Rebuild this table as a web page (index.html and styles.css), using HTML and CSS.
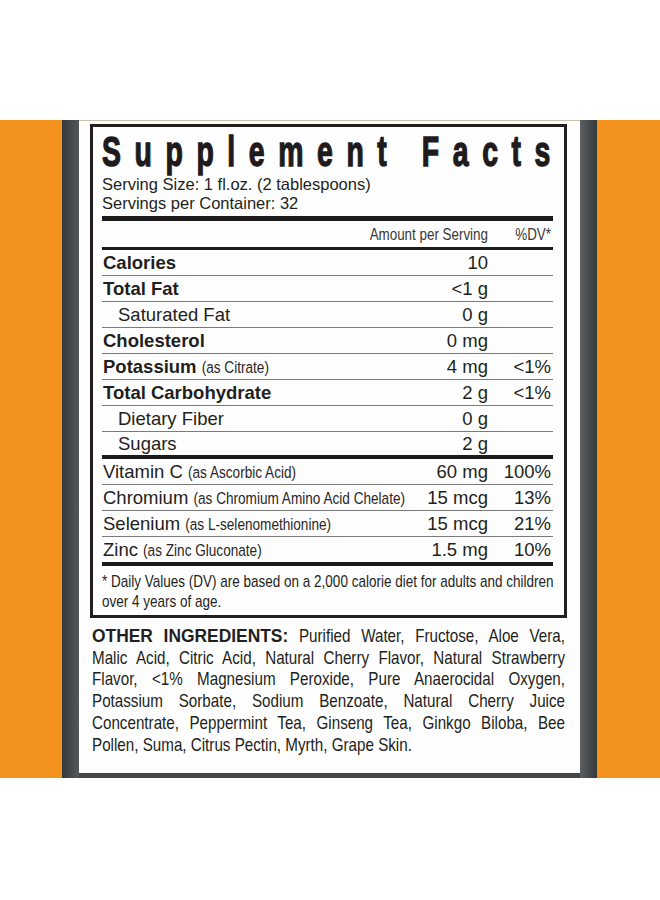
FILE: index.html
```html
<!DOCTYPE html>
<html lang="en">
<head>
<meta charset="utf-8">
<title>Supplement Facts</title>
<link rel="stylesheet" href="styles.css">
</head>
<body>
<div class="page">
  <div class="band">
    <div class="frame">
      <div class="panel">
        <section class="label">
          <h1 class="title"><span class="title-text">Supplement Facts</span></h1>
          <p class="serving">Serving Size: 1 fl.oz. (2 tablespoons)<br>Servings per Container: 32</p>
          <div class="head"><span class="h-amt">Amount per Serving</span><span class="h-dv">%DV*</span></div>
          <div class="rows">
            <div class="row"><span class="name b">Calories</span><span class="amt">10</span><span class="dv"></span></div>
            <div class="row"><span class="name b">Total Fat</span><span class="amt">&lt;1 g</span><span class="dv"></span></div>
            <div class="row"><span class="name sub">Saturated Fat</span><span class="amt">0 g</span><span class="dv"></span></div>
            <div class="row"><span class="name b">Cholesterol</span><span class="amt">0 mg</span><span class="dv"></span></div>
            <div class="row"><span class="name"><b>Potassium</b> <small>(as Citrate)</small></span><span class="amt">4 mg</span><span class="dv">&lt;1%</span></div>
            <div class="row"><span class="name b">Total Carbohydrate</span><span class="amt">2 g</span><span class="dv">&lt;1%</span></div>
            <div class="row"><span class="name sub">Dietary Fiber</span><span class="amt">0 g</span><span class="dv"></span></div>
            <div class="row row-end"><span class="name sub">Sugars</span><span class="amt">2 g</span><span class="dv"></span></div>
            <div class="row"><span class="name">Vitamin C <small>(as Ascorbic Acid)</small></span><span class="amt">60 mg</span><span class="dv">100%</span></div>
            <div class="row"><span class="name">Chromium <small>(as Chromium Amino Acid Chelate)</small></span><span class="amt">15 mcg</span><span class="dv">13%</span></div>
            <div class="row"><span class="name">Selenium <small>(as L-selenomethionine)</small></span><span class="amt">15 mcg</span><span class="dv">21%</span></div>
            <div class="row row-last"><span class="name">Zinc <small>(as Zinc Gluconate)</small></span><span class="amt">1.5 mg</span><span class="dv">10%</span></div>
          </div>
          <p class="note"><span class="note-text">* Daily Values (DV) are based on a 2,000 calorie diet for adults and children<br>over 4 years of age.</span></p>
        </section>
        <p class="ingredients">
          <span class="line"><b>OTHER</b> <b>INGREDIENTS:</b> Purified Water, Fructose, Aloe Vera,</span>
          <span class="line">Malic Acid, Citric Acid, Natural Cherry Flavor, Natural Strawberry</span>
          <span class="line">Flavor, &lt;1% Magnesium Peroxide, Pure Anaerocidal Oxygen,</span>
          <span class="line">Potassium Sorbate, Sodium Benzoate, Natural Cherry Juice</span>
          <span class="line">Concentrate, Peppermint Tea, Ginseng Tea, Ginkgo Biloba, Bee</span>
          <span class="line last">Pollen, Suma, Citrus Pectin, Myrth, Grape Skin.</span>
        </p>
      </div>
    </div>
  </div>
</div>
</body>
</html>
```
FILE: styles.css
```css
* { box-sizing: border-box; }
html, body { margin: 0; padding: 0; background: #ffffff; }
body { font-family: "Liberation Sans", Arial, sans-serif; color: #231f20; }

.page { padding-top: 120px; height: 900px; overflow: hidden; }

.band {
  background: #f4921e;
  height: 658px;
  display: flex;
}

.frame {
  margin: 0 63px 0 62px;
  flex: 1;
  min-width: 0;
  display: flex;
  padding: 0 17px 5px 17px;
  background:
    linear-gradient(to right, #35383b 0, #55585b 17px, transparent 17px, transparent calc(100% - 17px), #5c5f62 calc(100% - 17px), #36393c 100%),
    #44474a;
}

.panel {
  flex: 1;
  min-width: 0;
  background: #fefefe;
  border-top: 1px solid #cdbfa8;
  padding: 3px 13px 0 11px;
}

.label {
  border: 3px solid #231f20;
  padding: 0 11px 9px 9px;
}

/* Heavy condensed headline */
.title {
  margin: 4px 0 0 0;
  height: 40px;
  white-space: nowrap;
  font-family: "Liberation Sans", Arial, sans-serif;
  font-weight: bold;
  font-size: 43px;
  line-height: 40px;
  letter-spacing: 20.6px;
  color: #1f1b1c;
}
.title-text {
  display: inline-block;
  margin-right: -240px;
  transform: scaleX(0.66);
  transform-origin: 0 50%;
  -webkit-text-stroke: 1.4px #1f1b1c;
}

.serving {
  margin: 4px 0 0 0;
  font-size: 16.5px;
  line-height: 19px;
}

.head {
  margin-top: 3px;
  border-top: 5px solid #1c1a1b;
  border-bottom: 3px solid #1c1a1b;
  height: 34px;
  display: grid;
  grid-template-columns: 1fr auto 65px;
  align-items: center;
  font-size: 13.4px;
  color: #3a3637;
}
.h-amt, .h-dv {
  display: inline-block;
  transform: scaleY(1.25);
  transform-origin: 50% 50%;
}
.h-amt { grid-column: 2; justify-self: end; }
.h-dv { grid-column: 3; justify-self: end; margin-right: 2px; }

.row {
  height: 26px;
  border-bottom: 1px solid #7a7a7a;
  display: grid;
  grid-template-columns: 1fr auto 65px;
  align-items: center;
  font-size: 18.5px;
  white-space: nowrap;
}
.row-end { height: 27px; border-bottom: 4px solid #1c1a1b; }
.row-last { height: 29px; border-bottom: 4px solid #1c1a1b; }
.name { padding-left: 1px; }
.b { font-weight: bold; }
.sub { padding-left: 16px; }
.name small {
  display: inline-block;
  font-size: 13.6px;
  color: #2a2627;
  transform: scaleY(1.22);
  transform-origin: 50% 79%;
}
.amt { text-align: right; }
.dv { text-align: right; padding-right: 2px; }

.note {
  margin: 0 -8px 0 0;
  padding-top: 6px;
  white-space: nowrap;
}
.note-text {
  display: block;
  font-size: 13.5px;
  line-height: 17px;
  transform: scaleY(1.17);
  transform-origin: 0 0;
}

.ingredients {
  margin: 6.5px 2px 0 2px;
  font-size: 15.2px;
  line-height: 17.7px;
  transform: scaleY(1.22);
  transform-origin: 0 0;
}
.ingredients b {
  display: inline-block;
  font-size: 17.4px;
  line-height: 17.7px;
  transform: scaleY(0.87);
  transform-origin: 50% 80%;
}
.line {
  display: block;
  text-align: justify;
  text-align-last: justify;
}
.line.last { text-align-last: left; }
```
